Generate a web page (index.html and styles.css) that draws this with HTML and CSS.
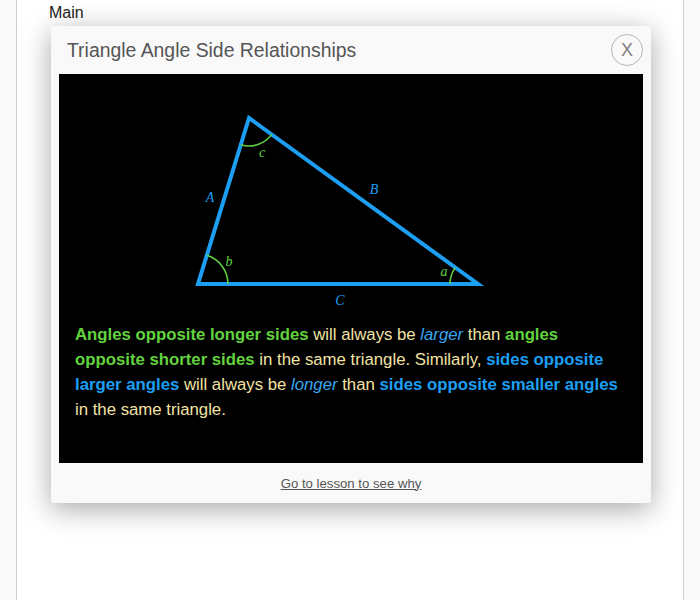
FILE: index.html
```html
<!DOCTYPE html>
<html>
<head>
<meta charset="utf-8">
<link rel="stylesheet" href="styles.css">
</head>
<body>
<div class="page">
  <div class="main">Main</div>
</div>
<div class="modal">
  <div class="modal-head">
    <h1 class="modal-title">Triangle Angle Side Relationships</h1>
    <button class="close">X</button>
  </div>
  <div class="figure">
    <svg class="tri" width="584" height="240" viewBox="0 0 584 240">
      <polygon points="190,44 139,210 419,210" fill="none" stroke="#1c9ff2" stroke-width="4" stroke-linejoin="miter" stroke-miterlimit="10"/>
      <path d="M147.8,181.3 A30,30 0 0 1 169,210" fill="none" stroke="#5fd040" stroke-width="1.6"/>
      <path d="M181.8,70.8 A28,28 0 0 0 212.7,60.4" fill="none" stroke="#5fd040" stroke-width="1.6"/>
      <path d="M391,210 A28,28 0 0 1 396.3,193.6" fill="none" stroke="#5fd040" stroke-width="1.6"/>
      <text class="lbl blue" x="151" y="128" text-anchor="middle">A</text>
      <text class="lbl blue" x="315" y="120" text-anchor="middle">B</text>
      <text class="lbl blue" x="281" y="231" text-anchor="middle">C</text>
      <text class="lbl green" x="203" y="83" text-anchor="middle">c</text>
      <text class="lbl green" x="170" y="192" text-anchor="middle">b</text>
      <text class="lbl green" x="385" y="202" text-anchor="middle">a</text>
    </svg>
    <p class="desc"><b class="g">Angles opposite longer sides</b> will always be <i class="b">larger</i> than <b class="g">angles opposite shorter sides</b> in the same triangle. Similarly, <b class="bl">sides opposite larger angles</b> will always be <i class="b">longer</i> than <b class="bl">sides opposite smaller angles</b> in the same triangle.</p>
  </div>
  <div class="modal-foot">
    <a href="#" class="lesson">Go to lesson to see why</a>
  </div>
</div>
</body>
</html>
```

FILE: styles.css
```css
html, body {
  margin: 0;
  padding: 0;
  background: #f9f9f9;
  font-family: "Liberation Sans", Arial, sans-serif;
}

.page {
  margin-left: 16px;
  width: 666px;
  min-height: 600px;
  background: #fff;
  border-left: 1px solid #cfcfcf;
  border-right: 1px solid #cfcfcf;
}

.main {
  padding: 4px 32px 0;
  font-size: 16px;
  line-height: 18px;
  color: #222;
}

.modal {
  position: absolute;
  top: 26px;
  left: 51px;
  width: 600px;
  box-sizing: border-box;
  padding: 8px 8px 0;
  background: #f9f9f9;
  border-radius: 3px;
  box-shadow: 0 6px 28px rgba(0, 0, 0, 0.35);
}

.modal-head {
  display: flex;
  align-items: center;
  justify-content: space-between;
  height: 32px;
  margin-bottom: 8px;
  padding-left: 8px;
}

.modal-title {
  margin: 0;
  font-size: 19.4px;
  font-weight: normal;
  color: #555;
}

.close {
  width: 32px;
  height: 32px;
  border-radius: 50%;
  border: 1px solid #b8b8b8;
  background: transparent;
  color: #808080;
  font-family: "Liberation Sans", Arial, sans-serif;
  font-size: 18px;
  font-weight: 300;
  padding: 0;
  display: flex;
  align-items: center;
  justify-content: center;
}

.figure {
  background: #000;
  height: 389px;
}

.tri {
  display: block;
}

.lbl {
  font-family: "Liberation Serif", "Times New Roman", serif;
  font-style: italic;
  font-size: 14px;
}

.lbl.blue { fill: #1c9ff2; }
.lbl.green { fill: #5fd040; }

.desc {
  margin: 0;
  padding: 8px 16px 0;
  font-size: 16.75px;
  line-height: 25px;
  color: #f2e3a4;
}

.desc .g { color: #62d33e; }
.desc .bl { color: #1c9ff2; }
.desc .b { color: #3aa6f0; }

.modal-foot {
  height: 40px;
  display: flex;
  align-items: center;
  justify-content: center;
}

.lesson {
  font-size: 13.2px;
  color: #555;
  text-decoration: underline;
}
```
